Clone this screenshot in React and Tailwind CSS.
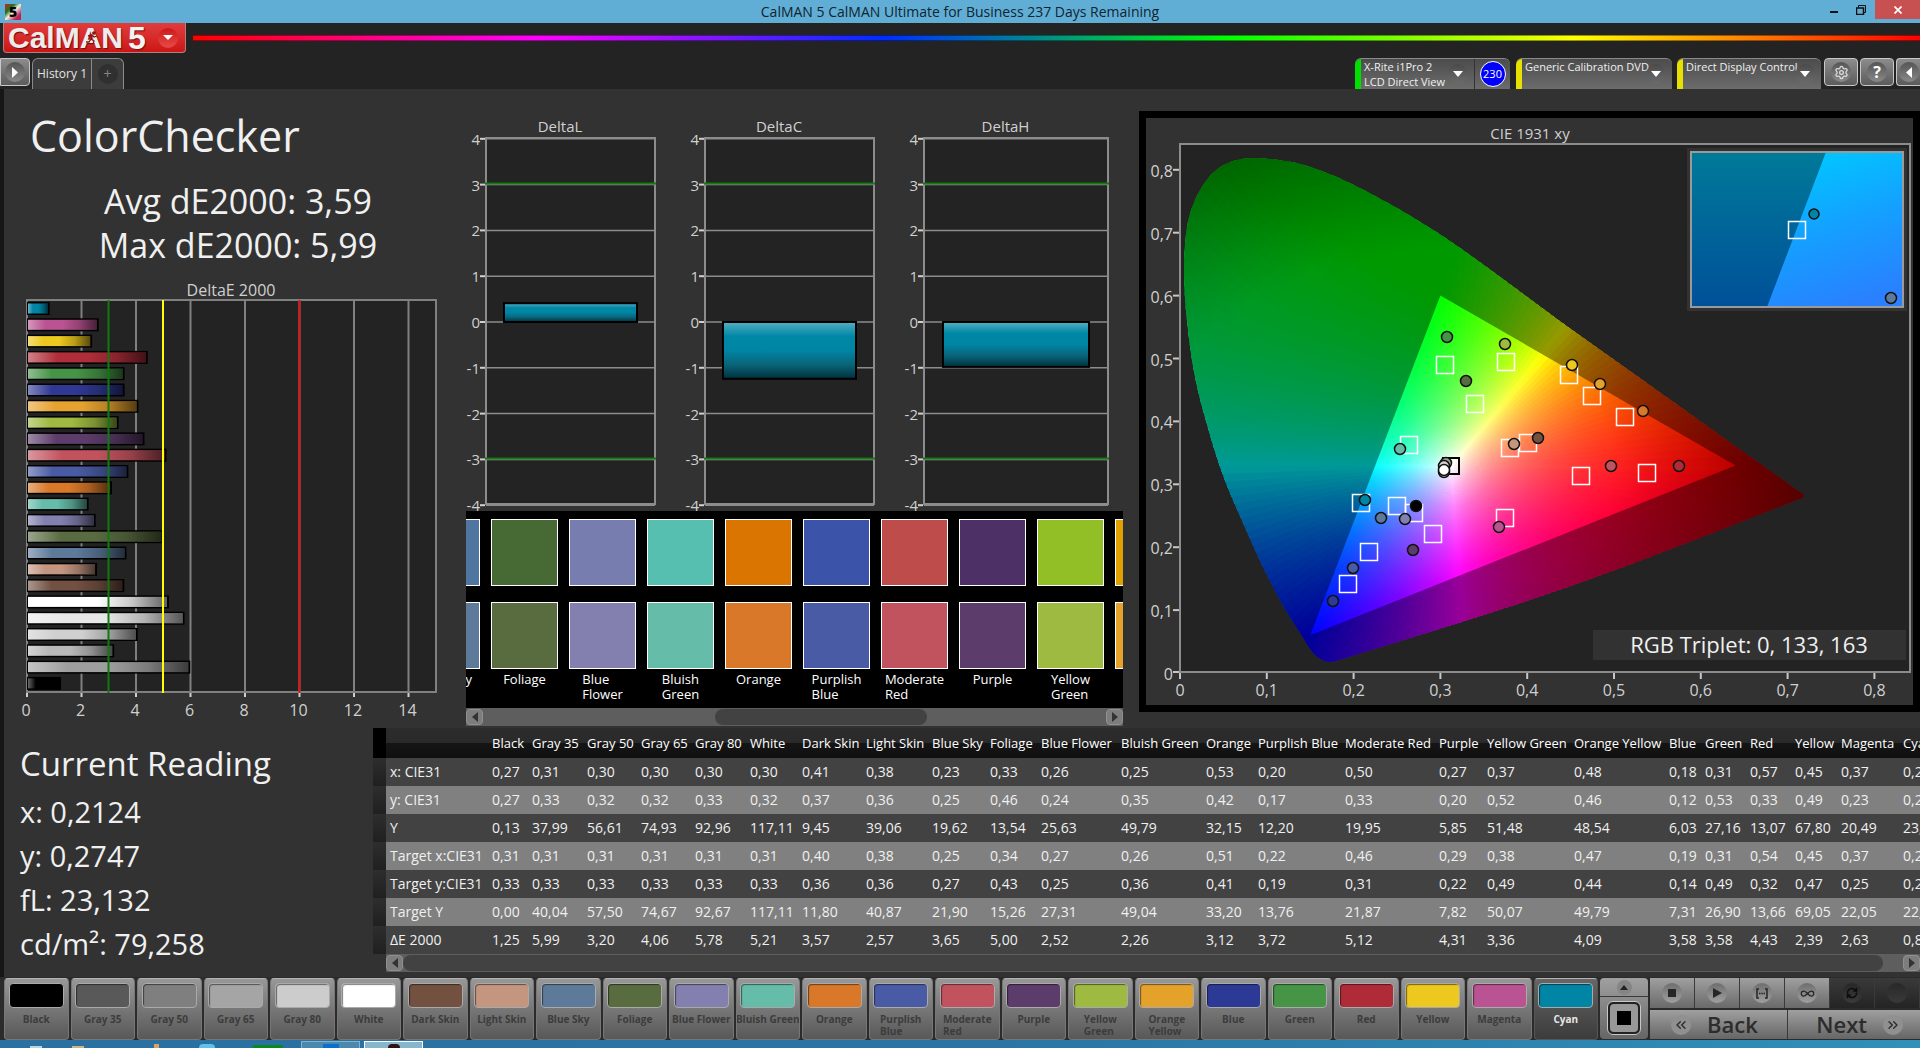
import { useId } from "react";
import {
  ChevronsLeft,
  ChevronsRight,
  Infinity as InfinityIcon,
  RefreshCw,
  Settings,
} from "lucide-react";

const patches = [
  { name: "Black", color: "#000000", bar: "#000000", target: "#000000" },
  { name: "Gray 35", color: "#595959", bar: "#9e9e9e", target: "#595959" },
  { name: "Gray 50", color: "#7f7f7f", bar: "#b9b9b9", target: "#7f7f7f" },
  { name: "Gray 65", color: "#a5a5a5", bar: "#d0d0d0", target: "#a5a5a5" },
  { name: "Gray 80", color: "#cccccc", bar: "#e7e7e7", target: "#cccccc" },
  { name: "White", color: "#ffffff", bar: "#ffffff", target: "#ffffff" },
  { name: "Dark Skin", color: "#735141", bar: "#735142", target: "#735141" },
  { name: "Light Skin", color: "#c49680", bar: "#c49681", target: "#c49680" },
  { name: "Blue Sky", color: "#5d7a9b", bar: "#5d7a9b", target: "#4e76a0" },
  { name: "Foliage", color: "#596c40", bar: "#596b41", target: "#476a34" },
  { name: "Blue Flower", color: "#8380b0", bar: "#8380b0", target: "#787db0" },
  { name: "Bluish Green", color: "#64bca9", bar: "#64bca9", target: "#57bfb0" },
  { name: "Orange", color: "#d87828", bar: "#d87828", target: "#d97500" },
  { name: "Purplish Blue", color: "#495ba4", bar: "#495ba4", target: "#3b54a9" },
  { name: "Moderate Red", color: "#c1535f", bar: "#c1535f", target: "#be4c4b" },
  { name: "Purple", color: "#5c3c6a", bar: "#5c3c6a", target: "#4d3166" },
  { name: "Yellow Green", color: "#9eba41", bar: "#9eba41", target: "#92bf26" },
  { name: "Orange Yellow", color: "#e5a22b", bar: "#e5a22f", target: "#e0a000" },
  { name: "Blue", color: "#2c3a96", bar: "#2f3994", target: "#2c3a96" },
  { name: "Green", color: "#469445", bar: "#479448", target: "#469445" },
  { name: "Red", color: "#b02b38", bar: "#b02e39", target: "#b02b38" },
  { name: "Yellow", color: "#edc81e", bar: "#edc81e", target: "#edc81e" },
  { name: "Magenta", color: "#ba5391", bar: "#bb5393", target: "#ba5391" },
  { name: "Cyan", color: "#0085a5", bar: "#0085a5", target: "#0085a5" },
];

const columnWidths = [
  "w-[40px]", "w-[55px]", "w-[54px]", "w-[54px]", "w-[55px]", "w-[52px]",
  "w-[64px]", "w-[66px]", "w-[58px]", "w-[51px]", "w-[80px]", "w-[85px]",
  "w-[52px]", "w-[87px]", "w-[94px]", "w-[48px]", "w-[87px]", "w-[95px]",
  "w-[36px]", "w-[45px]", "w-[45px]", "w-[46px]", "w-[62px]", "w-[45px]",
];

const rows = [
  ["x: CIE31", "0,27 0,31 0,30 0,30 0,30 0,30 0,41 0,38 0,23 0,33 0,26 0,25 0,53 0,20 0,50 0,27 0,37 0,48 0,18 0,31 0,57 0,45 0,37 0,21"],
  ["y: CIE31", "0,27 0,33 0,32 0,32 0,33 0,32 0,37 0,36 0,25 0,46 0,24 0,35 0,42 0,17 0,33 0,20 0,52 0,46 0,12 0,53 0,33 0,49 0,23 0,27"],
  ["Y", "0,13 37,99 56,61 74,93 92,96 117,11 9,45 39,06 19,62 13,54 25,63 49,79 32,15 12,20 19,95 5,85 51,48 48,54 6,03 27,16 13,07 67,80 20,49 23,13"],
  ["Target x:CIE31", "0,31 0,31 0,31 0,31 0,31 0,31 0,40 0,38 0,25 0,34 0,27 0,26 0,51 0,22 0,46 0,29 0,38 0,47 0,19 0,31 0,54 0,45 0,37 0,21"],
  ["Target y:CIE31", "0,33 0,33 0,33 0,33 0,33 0,33 0,36 0,36 0,27 0,43 0,25 0,36 0,41 0,19 0,31 0,22 0,49 0,44 0,14 0,49 0,32 0,47 0,25 0,27"],
  ["Target Y", "0,00 40,04 57,50 74,67 92,67 117,11 11,80 40,87 21,90 15,26 27,31 49,04 33,20 13,76 21,87 7,82 50,07 49,79 7,31 26,90 13,66 69,05 22,05 22,81"],
  ["ΔE 2000", "1,25 5,99 3,20 4,06 5,78 5,21 3,57 2,57 3,65 5,00 2,52 2,26 3,12 3,72 5,12 4,31 3,36 4,09 3,58 3,58 4,43 2,39 2,63 0,83"],
].map(([label, values]) => ({ label, values: values.split(" ") }));

const deltaE = rows[6].values.map((v) => parseFloat(v.replace(",", ".")));

/* ---------- CIE diagram maths ---------- */

const SX = 868;
const SY = 629;
const Y0 = 529;
const WHITE = [271, 322];
const TRIANGLE = "M260.4 151.5L555.5 321.4L130.2 491.3Z";

const locus = [
  [149, 518], [139, 514], [131, 506], [119, 487], [104, 463], [84, 425],
  [64, 381], [44, 334], [28, 284], [15, 233], [7, 177], [4, 126], [7, 83],
  [15, 56], [29, 33], [42, 22], [57, 16], [74, 14], [99, 16], [124, 21],
  [159, 34], [208, 59], [258, 89], [308, 124], [388, 183], [457, 232],
  [555, 302], [617, 346], [624, 352], [617, 356], [388, 443], [159, 516],
];

// Catmull-Rom through the locus points
function smoothPath(pts) {
  const n = pts.length;
  let d = `M${pts[0][0]} ${pts[0][1]}`;
  for (let i = 0; i < n; i++) {
    const p0 = pts[(i - 1 + n) % n];
    const p1 = pts[i];
    const p2 = pts[(i + 1) % n];
    const p3 = pts[(i + 2) % n];
    const dist = Math.hypot(p2[0] - p1[0], p2[1] - p1[1]);
    const limit = (a, b) => {
      const vx = (b[0] - a[0]) / 6;
      const vy = (b[1] - a[1]) / 6;
      const len = Math.hypot(vx, vy) || 1;
      const k = Math.min(1, dist / 3 / len);
      return [vx * k, vy * k];
    };
    const a = limit(p0, p2);
    const b = limit(p1, p3);
    d += `C${p1[0] + a[0]} ${p1[1] + a[1]} ${p2[0] - b[0]} ${p2[1] - b[1]} ${p2[0]} ${p2[1]}`;
  }
  return d + "Z";
}

function gamutColor(px, py) {
  const x = px / SX;
  const y = (Y0 - py) / SY;
  const z = 1 - x - y;
  let r = Math.max(0, 3.2406 * x - 1.5372 * y - 0.4986 * z);
  let g = Math.max(0, -0.9689 * x + 1.8758 * y + 0.0415 * z);
  let b = Math.max(0, 0.0557 * x - 0.204 * y + 1.057 * z);
  const m = Math.max(r, g, b) || 1;
  r /= m;
  g /= m;
  b /= m;
  const d = Math.hypot(x - 0.3127, y - 0.329);
  const fade =
    1 -
    Math.max(0, r - Math.max(g, b)) * 2 * Math.max(0, d - 0.19) -
    Math.max(0, g - Math.max(r, b)) * 1.7 * Math.max(0, d - 0.35);
  const c = (v) => Math.round(255 * v * fade);
  return `rgb(${c(r)},${c(g)},${c(b)})`;
}

const STEP = 2;
const REACH = 400;
const wedges = Array.from({ length: 360 / STEP }, (_, i) => {
  const at = (deg, r) => {
    const rad = (deg * Math.PI) / 180;
    return [WHITE[0] + Math.cos(rad) * r, WHITE[1] + Math.sin(rad) * r];
  };
  const stops = [];
  for (let r = 0; r <= REACH; r += 20) {
    const [px, py] = at(i * STEP + STEP / 2, r);
    stops.push({ offset: r / REACH, color: gamutColor(px, py) });
  }
  const p = at(i * STEP, REACH + 40);
  const q = at(i * STEP + STEP + 1, REACH + 40);
  return { stops, d: `M${WHITE[0]} ${WHITE[1]}L${p[0]} ${p[1]}L${q[0]} ${q[1]}Z` };
});

const targets = [
  [264, 220], [325, 217], [294, 259], [388, 230], [411, 251], [444, 272],
  [329, 303], [347, 298], [228, 300], [400, 331], [466, 328], [180, 358],
  [216, 361], [233, 368], [252, 389], [324, 373], [188, 407], [167, 439],
];

const readings = [
  [266, 192, "#469445"], [324, 199, "#9eba41"], [285, 236, "#596c40"],
  [391, 220, "#edc81e"], [419, 239, "#e5a22b"], [462, 266, "#d87828"],
  [357, 293, "#735141"], [333, 299, "#c49680"], [219, 304, "#64bca9"],
  [430, 321, "#c1535f"], [498, 321, "#b02b38"], [184, 355, "#0085a5"],
  [235, 361, "#000000"], [200, 373, "#5d7a9b"], [224, 374, "#8380b0"],
  [318, 382, "#ba5391"], [232, 405, "#5c3c6a"], [172, 423, "#495ba4"],
  [152, 456, "#2c3a96"], [265, 318, "#9e9e9e"], [263, 321, "#d0d0d0"],
  [263, 327, "#e7e7e7"], [263, 325, "#ffffff"],
];

function CieChart() {
  const ticks = [0, 1, 2, 3, 4, 5, 6, 7, 8];
  return (
    <svg viewBox="0 0 767 587" className="block w-full" role="img" aria-label="CIE 1931 xy">
      <defs>
        <clipPath id="locus">
          <path d={smoothPath(locus)} />
        </clipPath>
        {wedges.map((w, i) => (
          <radialGradient
            key={i}
            id={`ray${i}`}
            gradientUnits="userSpaceOnUse"
            cx={WHITE[0]}
            cy={WHITE[1]}
            r={REACH}
          >
            {w.stops.map((s) => (
              <stop key={s.offset} offset={s.offset} stopColor={s.color} />
            ))}
          </radialGradient>
        ))}
        <linearGradient id="insetDark" x1="0" y1="0" x2="0" y2="1">
          <stop offset="0" stopColor="#007a99" />
          <stop offset="1" stopColor="#005099" />
        </linearGradient>
        <linearGradient id="insetLight" x1="0.3" y1="0" x2="0.6" y2="1">
          <stop offset="0" stopColor="#00c8ff" />
          <stop offset="0.5" stopColor="#14a0ff" />
          <stop offset="1" stopColor="#2a80ff" />
        </linearGradient>
      </defs>
      <rect width="767" height="587" fill="#323232" />
      <text x="384" y="21" textAnchor="middle" fontSize="15" fill="#d0d0d0">
        CIE 1931 xy
      </text>
      <g transform="translate(34 26)">
        <rect x="0" y="0" width="730" height="528" fill="#232323" stroke="#8c8c8c" strokeWidth="2" />
        <g clipPath="url(#locus)">
          <circle cx={WHITE[0]} cy={WHITE[1]} r="40" fill="#fff" />
          {wedges.map((w, i) => (
            <path key={i} d={w.d} fill={`url(#ray${i})`} />
          ))}
          <circle cx={WHITE[0]} cy={WHITE[1]} r="3" fill="#fff" />
          <path d={`M0 0H730V528H0Z${TRIANGLE}`} fillRule="evenodd" fill="#000" fillOpacity="0.4" />
        </g>
        {ticks.map((t) => (
          <g key={t} stroke="#c8c8c8" strokeWidth="2">
            <line x1={t * 86.8} x2={t * 86.8} y1="529" y2="535" />
            <line x1="-7" x2="-1" y1={t ? Y0 - t * 62.9 : 528} y2={t ? Y0 - t * 62.9 : 528} />
          </g>
        ))}
        {ticks.map((t) => (
          <g key={t} fontSize="16" fill="#d0d0d0">
            <text x={t * 86.8} y="552" textAnchor="middle">
              {t ? `0,${t}` : "0"}
            </text>
            <text x="-7" y={Y0 - t * 62.9 + 7} textAnchor="end">
              {t ? `0,${t}` : "0"}
            </text>
          </g>
        ))}
        <g transform="translate(1 1)">
          <rect x="262" y="313" width="16" height="16" fill="none" stroke="#000" strokeWidth="2" />
          {targets.map(([x, y]) => (
            <rect key={`${x}-${y}`} x={x - 8.5} y={y - 8.5} width="17" height="17" fill="none" stroke="#fff" strokeWidth="1.500" />
          ))}
          {readings.map(([x, y, fill]) => (
            <circle key={`${x}-${y}`} cx={x} cy={y} r="5.5" fill={fill} stroke="#111" strokeWidth="1.500" />
          ))}
        </g>

        {/* zoomed view of the current patch */}
        <rect x="507" y="4" width="220" height="163" fill="#323232" />
        <rect x="511" y="8" width="212" height="155" fill="url(#insetDark)" />
        <path d="M646 8H723V163H587Z" fill="url(#insetLight)" />
        <rect x="511" y="8" width="212" height="155" fill="none" stroke="#9a9a9a" strokeWidth="2" />
        <rect x="608.5" y="77.5" width="17" height="17" fill="none" stroke="#fff" strokeWidth="1.500" />
        <circle cx="634" cy="70" r="5" fill="#0085a5" stroke="#111" strokeWidth="1.500" />
        <circle cx="711" cy="154" r="5.5" fill="#5d7a9b" stroke="#111" strokeWidth="1.500" />

        <rect x="413" y="486" width="313" height="30" fill="#323232" />
        <text x="569" y="509" textAnchor="middle" fontSize="22" fill="#f0f0f0">
          RGB Triplet: 0, 133, 163
        </text>
      </g>
    </svg>
  );
}

function DeltaEChart() {
  const unit = 27.25;
  return (
    <svg viewBox="0 0 436 450" className="block w-full" role="img" aria-label="DeltaE 2000">
      <defs>
        <linearGradient id="barShade">
          <stop offset="0" stopColor="#fff" stopOpacity="0.4" />
          <stop offset="0.25" stopColor="#fff" stopOpacity="0" />
          <stop offset="0.5" stopColor="#000" stopOpacity="0" />
          <stop offset="0.75" stopColor="#000" stopOpacity="0.22" />
          <stop offset="1" stopColor="#000" stopOpacity="0.62" />
        </linearGradient>
      </defs>
      <text x="227" y="22" textAnchor="middle" fontSize="16" fill="#d0d0d0">
        DeltaE 2000
      </text>
      <rect x="23" y="26" width="409" height="392" fill="#232323" stroke="#808080" strokeWidth="2" />
      {[0, 2, 4, 6, 8, 10, 12, 14].map((t) => (
        <g key={t}>
          <line x1={23 + t * unit} x2={23 + t * unit} y1="26" y2="418" stroke="#808080" strokeWidth="2" />
          <line x1={23 + t * unit} x2={23 + t * unit} y1="419" y2="423" stroke="#d0d0d0" strokeWidth="2" />
          <text x={22 + t * unit} y="442" textAnchor="middle" fontSize="16" fill="#d0d0d0">
            {t}
          </text>
        </g>
      ))}
      {deltaE.map((v, i) => {
        const y = 28 + (23 - i) * 16.3;
        return (
          <g key={patches[i].name}>
            <rect x="23" y={y} width={v * unit} height="13" fill="#000" />
            <rect x="24" y={y + 1.5} width={v * unit - 3} height="10" fill={patches[i].bar} />
            <rect x="24" y={y + 1.5} width={v * unit - 3} height="10" fill="url(#barShade)" />
          </g>
        );
      })}
      <line x1="104.5" x2="104.5" y1="26" y2="419" stroke="#0f7a0f" strokeWidth="2" />
      <line x1="159" x2="159" y1="26" y2="419" stroke="#ffff00" strokeWidth="2" />
      <line x1="295.5" x2="295.5" y1="26" y2="419" stroke="#e01414" strokeWidth="2" />
    </svg>
  );
}

function DeltaChart({ title, value, width }) {
  const id = useId();
  const plot = width - 21;
  const inset = Math.round(plot * 0.1) + 1;
  const zero = 233;
  const unit = 45.8;
  const top = value > 0 ? zero - value * unit : zero;
  const h = Math.abs(value) * unit;
  return (
    <svg width={width} height="422" viewBox={`0 0 ${width} 422`} role="img" aria-label={title}>
      <defs>
        <linearGradient id={id} x1="0" y1="0" x2="0" y2="1">
          <stop offset="0" stopColor="#55aec2" />
          <stop offset="0.25" stopColor="#0087a6" />
          <stop offset="0.5" stopColor="#0085a5" />
          <stop offset="0.75" stopColor="#0a6478" />
          <stop offset="1" stopColor="#00303c" />
        </linearGradient>
      </defs>
      <text x={width / 2 - 1} y="43" textAnchor="middle" fontSize="15" fill="#d0d0d0">
        {title}
      </text>
      <rect x="20" y="49" width={plot} height="366" fill="#232323" stroke="#8c8c8c" strokeWidth="2" />
      {[4, 3, 2, 1, 0, -1, -2, -3, -4].map((t) => {
        const y = zero - t * unit;
        const limit = Math.abs(t) === 3;
        return (
          <g key={t}>
            <line x1="20" x2={20 + plot} y1={y} y2={y} stroke="#8c8c8c" strokeWidth="1.500" />
            {limit && (
              <line x1="19" x2={21 + plot} y1={y - 1} y2={y - 1} stroke="#147814" strokeWidth="2" />
            )}
            <line x1="14" x2="19" y1={y} y2={y} stroke="#d0d0d0" strokeWidth="2" />
            <text x="14" y={y + 6} textAnchor="end" fontSize="15" fill="#d0d0d0">
              {t}
            </text>
          </g>
        );
      })}
      <rect
        x={20 + inset}
        y={top}
        width={plot - inset * 2}
        height={h}
        fill={`url(#${id})`}
        stroke="#000"
        strokeWidth="2"
      />
    </svg>
  );
}

function ScrollBar({ children }) {
  return (
    <div className="flex h-[18px] items-center bg-[#5e5e5e]">
      <button aria-label="Scroll left" className="flex h-4 w-[17px] items-center justify-center rounded-sm border border-[#909090] bg-[#7d7d7d]">
        <svg width="6" height="10" viewBox="0 0 6 10">
          <path d="M6 0V10L0 5Z" fill="#333" />
        </svg>
      </button>
      <div className="flex h-4 flex-1">{children}</div>
      <button aria-label="Scroll right" className="flex h-4 w-[17px] items-center justify-center rounded-sm border border-[#909090] bg-[#7d7d7d]">
        <svg width="6" height="10" viewBox="0 0 6 10">
          <path d="M0 0V10L6 5Z" fill="#333" />
        </svg>
      </button>
    </div>
  );
}

function TitleBar() {
  return (
    <div className="grid h-[23px] grid-cols-[1fr_auto_1fr] bg-[#60aed6] text-[#10242e]">
      <div className="flex items-center pl-[5px]">
        <div className="flex size-4 items-center justify-center bg-[linear-gradient(135deg,#d82020,#207020_30%,#f0f0e0_50%,#c02050_80%)] text-sm leading-4 font-extrabold text-black">
          5
        </div>
      </div>
      <h1 className="text-[14px] leading-[23px]">
        CalMAN 5 CalMAN Ultimate for Business 237 Days Remaining
      </h1>
      <div className="flex items-start justify-end">
        <button aria-label="Minimize" className="flex h-5 w-[26px] items-center justify-center">
          <svg width="8" height="10" viewBox="0 0 8 10">
            <rect y="6" width="8" height="2" fill="#111" />
          </svg>
        </button>
        <button aria-label="Restore" className="flex h-5 w-[28px] items-center justify-center">
          <svg width="10" height="10" viewBox="0 0 10 10" fill="none" stroke="#111">
            <path d="M2.5 2.5V.5H9.5V7.5H8" />
            <path d="M.5 3H7.500V9.500H.5Z" strokeWidth="1.500" />
          </svg>
        </button>
        <button aria-label="Close" className="flex h-[19px] w-[45px] items-center justify-center bg-[#c75050]">
          <svg width="8" height="8" viewBox="0 0 8 8" stroke="#fff" strokeWidth="1.700">
            <path d="M.5 .5L7.500 7.500M7.500 .5L.5 7.500" />
          </svg>
        </button>
      </div>
    </div>
  );
}

function DeviceTab({ lines, bar, children }) {
  return (
    <div className="flex h-[31px] rounded-t-md border-t border-[#8a8a8a] bg-linear-to-b from-[#4c4c4c] to-[#6c6c6c]">
      <div className={`w-[6px] shrink-0 rounded-tl-md ${bar}`} />
      <button className="flex min-w-0 flex-1 items-center justify-between pr-[6px] pl-[3px] text-left">
        <span className="h-full min-w-0 text-[11px] leading-[15px] whitespace-nowrap text-[#f0f0f0]">
          {lines.map((l) => (
            <span key={l} className="block">{l}</span>
          ))}
        </span>
        <span className="flex size-5 shrink-0 items-center justify-center rounded-full bg-linear-to-b from-[#454545]/60 to-[#6a6a6a]">
          <svg width="10" height="6" viewBox="0 0 10 6">
            <path d="M0 0H10L5 6Z" fill="#fff" />
          </svg>
        </span>
      </button>
      {children}
    </div>
  );
}

function ToolButton({ label, className = "w-[34px]", children }) {
  return (
    <button
      aria-label={label}
      className={`flex h-7 shrink-0 items-center justify-center rounded-sm border border-[#c8c8c8] bg-linear-to-b from-[#8c8c8c] to-[#5c5c5c] ${className}`}
    >
      <span className="flex size-5 items-center justify-center rounded-full bg-linear-to-b from-[#555] to-[#8a8a8a]">
        {children}
      </span>
    </button>
  );
}

function Header() {
  return (
    <header className="h-[66px] overflow-hidden bg-[#232323]">
      <div className="flex h-[31px] items-start gap-[7px]">
        <button className="ml-[3px] flex h-[30px] w-[183px] items-center rounded-b-sm border border-t-0 border-[#b08080] bg-linear-to-b from-[#e03c3c] to-[#cc1414] pl-1">
          <span className="relative text-[30px] leading-[30px] font-bold text-[#ececec] font-['Liberation_Sans',sans-serif] [text-shadow:1px_1px_1px_#701010]">
            CalMAN
            {/* running man inside the A */}
            <svg viewBox="0 0 12 14" className="absolute top-2 left-[78px] h-[14px] w-3" fill="none" stroke="#8a1414" strokeWidth="1.300">
              <circle cx="8" cy="2" r="1.200" fill="#8a1414" />
              <path d="M2 5L6 4L8 6L11 5M6 4L5 8L8 10L7 13M5 8L3 11L0 11" />
            </svg>
          </span>
          <span className="ml-[5px] text-[32px] leading-[30px] font-bold text-[#f4f4f4] font-['Liberation_Sans',sans-serif] [text-shadow:1px_1px_1px_#701010]">
            5
          </span>
          <span className="ml-3 flex size-5 items-center justify-center rounded-full bg-linear-to-b from-[#cc1414] to-[#e84848]">
            <svg width="10" height="5" viewBox="0 0 10 5">
              <path d="M0 0H10L5 5Z" fill="#fff" />
            </svg>
          </span>
        </button>
        <div className="mt-3 h-[6px] flex-1 border-y border-black/40 bg-[linear-gradient(to_right,#f00,#f0f_20%,#002cff_40%,#0f0_60%,#ff0_80%,#f00)]" />
      </div>
      <div className="mt-1 flex h-[31px] items-start">
        <ToolButton label="Expand" className="w-[30px] rounded-l-none">
          <svg width="6" height="11" viewBox="0 0 6 11">
            <path d="M0 0V11L6 5.500Z" fill="#fff" />
          </svg>
        </ToolButton>
        <div className="ml-[2px] flex h-[31px] rounded-t-md border border-b-0 border-[#8a8a8a] bg-[#3c3c3c]">
          <button className="w-[58px] text-xs text-[#e4e4e4]">History 1</button>
          <button aria-label="Add history" className="flex w-8 items-center justify-center border-l border-[#8a8a8a]">
            <span className="flex size-5 items-center justify-center rounded-full bg-[#303030] text-sm leading-none text-[#858585]">
              +
            </span>
          </button>
        </div>
        <div className="ml-auto flex">
          <div className="mr-[6px] w-[155px]">
            <DeviceTab lines={["X-Rite i1Pro 2", "LCD Direct View"]} bar="bg-[#00e000]">
              <div className="flex w-9 items-center justify-center border-l border-[#333]">
                <span className="flex size-[26px] items-center justify-center rounded-full border border-white bg-[#0000ff] text-[11px] text-white">
                  230
                </span>
              </div>
            </DeviceTab>
          </div>
          <div className="mr-[5px] w-[156px]">
            <DeviceTab lines={["Generic Calibration DVD"]} bar="bg-[#e8e000]" />
          </div>
          <div className="mr-[3px] w-[144px]">
            <DeviceTab lines={["Direct Display Control"]} bar="bg-[#e8e000]" />
          </div>
          <div className="flex gap-[2px]">
            <ToolButton label="Settings">
              <Settings size={15} className="text-[#ddd]" />
            </ToolButton>
            <ToolButton label="Help">
              <span className="text-base leading-none font-bold text-white">?</span>
            </ToolButton>
            <ToolButton label="Collapse" className="w-6 rounded-r-none border-r-0">
              <svg width="6" height="11" viewBox="0 0 6 11">
                <path d="M6 0V11L0 5.500Z" fill="#fff" />
              </svg>
            </ToolButton>
          </div>
        </div>
      </div>
    </header>
  );
}

function PatchLabel({ name, maxLength }) {
  const words = name.length > maxLength ? name.split(" ") : [name];
  return (
    <span className="block text-left whitespace-nowrap">
      {words.map((w) => (
        <span key={w} className="block">{w}</span>
      ))}
    </span>
  );
}

function PatchStrip() {
  return (
    <section>
      <div className="h-[197px] overflow-hidden bg-black pt-2">
        <div className="-ml-[53px] flex gap-[11px]">
          {patches.slice(8, 18).map((p) => (
            <div key={p.name} className="flex w-[67px] shrink-0 flex-col items-center">
              <div className="h-[67px] w-full border border-white" style={{ background: p.target }} />
              <div className="mt-4 h-[67px] w-full border border-white" style={{ background: p.color }} />
              <div className="mt-[3px] text-[13px] leading-[15px] text-white">
                <PatchLabel name={p.name} maxLength={10} />
              </div>
            </div>
          ))}
        </div>
      </div>
      <ScrollBar>
        <div className="w-[232px]" />
        <div className="w-[212px] rounded-lg bg-[#424242]" />
      </ScrollBar>
    </section>
  );
}

function DataTable() {
  return (
    <div className="flex min-w-0 flex-1">
      <div className="w-[13px] shrink-0">
        <div className="h-[30px] bg-black" />
        {rows.map((r) => (
          <div key={r.label} className="h-7 bg-linear-to-b from-[#2e2e2e] to-[#202020]" />
        ))}
      </div>
      <div className="min-w-0 flex-1 overflow-hidden">
        <table className="w-[1558px] table-fixed border-collapse text-left whitespace-nowrap text-[#f0f0f0]">
          <thead>
            <tr className="h-[30px] bg-[linear-gradient(#2c2c2c,#2a2a2a_50%,#151515_51%,#101010)] text-[13px] leading-[18px]">
              <th className="w-[102px]" aria-label="Measure" />
              {patches.map((p, i) => (
                <th key={p.name} scope="col" className={`p-0 pl-1 font-normal text-white ${columnWidths[i]}`}>
                  {p.name}
                </th>
              ))}
            </tr>
          </thead>
          <tbody className="text-[14px] leading-[20px]">
            {rows.map((r) => (
              <tr key={r.label} className="h-7 odd:bg-[#424242] even:bg-[#808080]">
                <th scope="row" className="p-0 pl-1 font-normal">{r.label}</th>
                {r.values.map((v, i) => (
                  <td key={patches[i].name} className="p-0 pl-1">{v}</td>
                ))}
              </tr>
            ))}
          </tbody>
        </table>
        <ScrollBar>
          <div className="w-[calc(100%-20px)] rounded-lg bg-[#424242]" />
        </ScrollBar>
      </div>
    </div>
  );
}

function PatchButton({ patch, selected }) {
  return (
    <button
      className={`flex h-[62px] min-w-0 flex-1 flex-col items-center overflow-hidden rounded-sm border border-t-[#b4b4b4] bg-linear-to-b pt-1 text-[10px] leading-[12px] font-bold ${
        selected
          ? "border-[#555] from-[#666] to-[#3c3c3c] text-[#e8e8e8]"
          : "border-[#777] from-[#989898] to-[#585858] text-[#3c3c3c]"
      }`}
    >
      <span
        className="h-[25px] w-[55px] shrink-0 rounded-sm border border-[#aaa] shadow-[inset_1px_1px_1px_rgba(0,0,0,0.5)]"
        style={{ background: patch.color }}
      />
      <span className="pt-[5px]">
        <PatchLabel name={patch.name} maxLength={patch.name.startsWith("Blu") || patch.name.endsWith("Skin") ? 20 : 11} />
      </span>
    </button>
  );
}

function TransportButton({ label, dark, children }) {
  return (
    <button
      aria-label={label}
      className={`flex flex-1 items-center justify-center border-r border-[#3a3a3a] bg-linear-to-b ${
        dark ? "from-[#3a3a3a] to-[#242424]" : "from-[#a0a0a0] to-[#6a6a6a]"
      }`}
    >
      <span
        className={`flex size-5 items-center justify-center rounded-full bg-linear-to-b ${
          dark ? "from-[#282828] to-[#3a3a3a]" : "from-[#6e6e6e] to-[#a0a0a0]"
        }`}
      >
        {children}
      </span>
    </button>
  );
}

function Footer() {
  return (
    <footer className="flex h-[63px] items-start gap-[2px] bg-[#2b2b2b] pt-px pl-1">
      <div className="flex min-w-0 flex-1 gap-[2px]">
        {patches.map((p) => (
          <PatchButton key={p.name} patch={p} selected={p.name === "Cyan"} />
        ))}
      </div>
      <div className="flex h-[61px] w-12 flex-col rounded-sm bg-linear-to-b from-[#a0a0a0] to-[#666]">
        <button aria-label="Show more" className="flex h-[19px] items-center justify-center border-b border-[#3a3a3a]">
          <span className="flex size-[15px] items-center justify-center rounded-full bg-[#858585]">
            <svg width="8" height="5" viewBox="0 0 8 5">
              <path d="M0 5L4 0L8 5Z" fill="#222" />
            </svg>
          </span>
        </button>
        <button aria-label="Full screen patch" className="mx-auto mt-1 flex size-[34px] items-center justify-center rounded-md border border-[#c8c8c8] bg-[#222] p-[2px]">
          <span className="flex size-full items-center justify-center rounded-sm bg-[#989898]">
            <span className="size-[14px] bg-black" />
          </span>
        </button>
      </div>
      <div className="flex h-[61px] w-[270px] flex-col gap-[2px]">
        <div className="flex h-[30px]">
          <TransportButton label="Stop">
            <svg width="8" height="8"><rect width="8" height="8" fill="#262626" /></svg>
          </TransportButton>
          <TransportButton label="Play">
            <svg width="9" height="10" viewBox="0 0 9 10"><path d="M0 0L9 5L0 10Z" fill="#262626" /></svg>
          </TransportButton>
          <TransportButton label="Range">
            <svg width="12" height="11" viewBox="0 0 12 11" fill="none" stroke="#262626" strokeWidth="1.500">
              <path d="M3 1H1V10H3M9 1H11V10H9M3 5.500H4.500M5.300 5.500H6.700M7.500 5.500H9" />
            </svg>
          </TransportButton>
          <TransportButton label="Continuous">
            <InfinityIcon size={15} className="text-[#262626]" />
          </TransportButton>
          <TransportButton label="Refresh" dark>
            <RefreshCw size={12} strokeWidth={3} className="text-[#0c0c0c]" />
          </TransportButton>
          <TransportButton label="Record" dark />
        </div>
        <div className="flex h-[29px] text-[22px] leading-[27px] font-semibold text-[#2c2c2c]">
          <button className="flex flex-1 items-center gap-4 border-r border-[#3a3a3a] bg-linear-to-b from-[#a0a0a0] to-[#666] pl-[21px]">
            <span className="flex size-5 items-center justify-center rounded-full bg-[#909090]">
              <ChevronsLeft size={16} />
            </span>
            Back
          </button>
          <button className="flex flex-1 items-center justify-end gap-4 bg-linear-to-b from-[#a0a0a0] to-[#666] pr-[17px]">
            Next
            <span className="flex size-5 items-center justify-center rounded-full bg-[#909090]">
              <ChevronsRight size={16} />
            </span>
          </button>
        </div>
      </div>
    </footer>
  );
}

function TaskBar() {
  return (
    <div className="flex h-2 items-end overflow-hidden bg-linear-to-r from-[#2a70a0] via-[#2a74a4] to-[#3090b8]">
      <div className="ml-[30px] h-[2px] w-3 bg-[#b8d4e0]" />
      <div className="ml-[30px] h-[2px] w-3 bg-[#c8b888]" />
      <div className="ml-[70px] h-1 w-[5px] bg-[#e0a060]" />
      <div className="ml-10 h-1 w-4 rounded-t-full bg-[#60c0e8]" />
      <div className="ml-[38px] h-[3px] w-[30px] bg-[#0a8a1a]" />
      <div className="ml-[18px] flex h-[7px] w-[59px] items-end justify-center border border-b-0 border-[#88b0c8] bg-[#4a88ac]">
        <div className="h-1 w-4 bg-[#0a70d0]" />
      </div>
      <div className="ml-1 flex h-[7px] w-[59px] items-end justify-center border border-b-0 border-white bg-[#88b4cc]">
        <div className="h-1 w-3 rounded-t-full bg-[#301010]" />
      </div>
    </div>
  );
}

export default function App() {
  return (
    <div className="flex min-h-screen flex-col overflow-hidden bg-[#323232] text-[#d0d0d0] font-['Open_Sans','Noto_Sans',sans-serif]">
      <TitleBar />
      <Header />
      <main className="flex-1 border-l-4 border-[#161616] bg-[#323232]">
        <div className="flex h-[639px]">
          <section className="w-[436px] shrink-0">
            <h2 className="pt-[17px] pl-[26px] text-[43px] leading-[60px] text-[#f0f0f0]">ColorChecker</h2>
            <div className="mt-[13px] pl-8 text-center text-[34px] leading-[44px] text-[#f0f0f0]">
              <p>Avg dE2000: 3,59</p>
              <p>Max dE2000: 5,99</p>
            </div>
            <div className="pt-[7px]">
              <DeltaEChart />
            </div>
          </section>
          <section className="mr-4 ml-[26px] w-[657px] shrink-0">
            <div className="flex h-[422px] gap-[29px]">
              <DeltaChart title="DeltaL" value={0.41} width={190} />
              <DeltaChart title="DeltaC" value={-1.24} width={190} />
              <DeltaChart title="DeltaH" value={-0.98} width={205} />
            </div>
            <PatchStrip />
          </section>
          <section className="mt-[22px] min-w-0 flex-1 self-start border-[7px] border-black">
            <CieChart />
          </section>
        </div>
        <div className="flex">
          <section className="w-[369px] shrink-0 pl-4 text-[#f0f0f0]">
            <h2 className="pt-[14px] text-[33px] leading-[44px]">Current Reading</h2>
            <div className="pt-1 text-[29px] leading-[44px]">
              <p>x: 0,2124</p>
              <p>y: 0,2747</p>
              <p>fL: 23,132</p>
              <p>cd/m²: 79,258</p>
            </div>
          </section>
          <DataTable />
        </div>
      </main>
      <Footer />
      <TaskBar />
    </div>
  );
}
